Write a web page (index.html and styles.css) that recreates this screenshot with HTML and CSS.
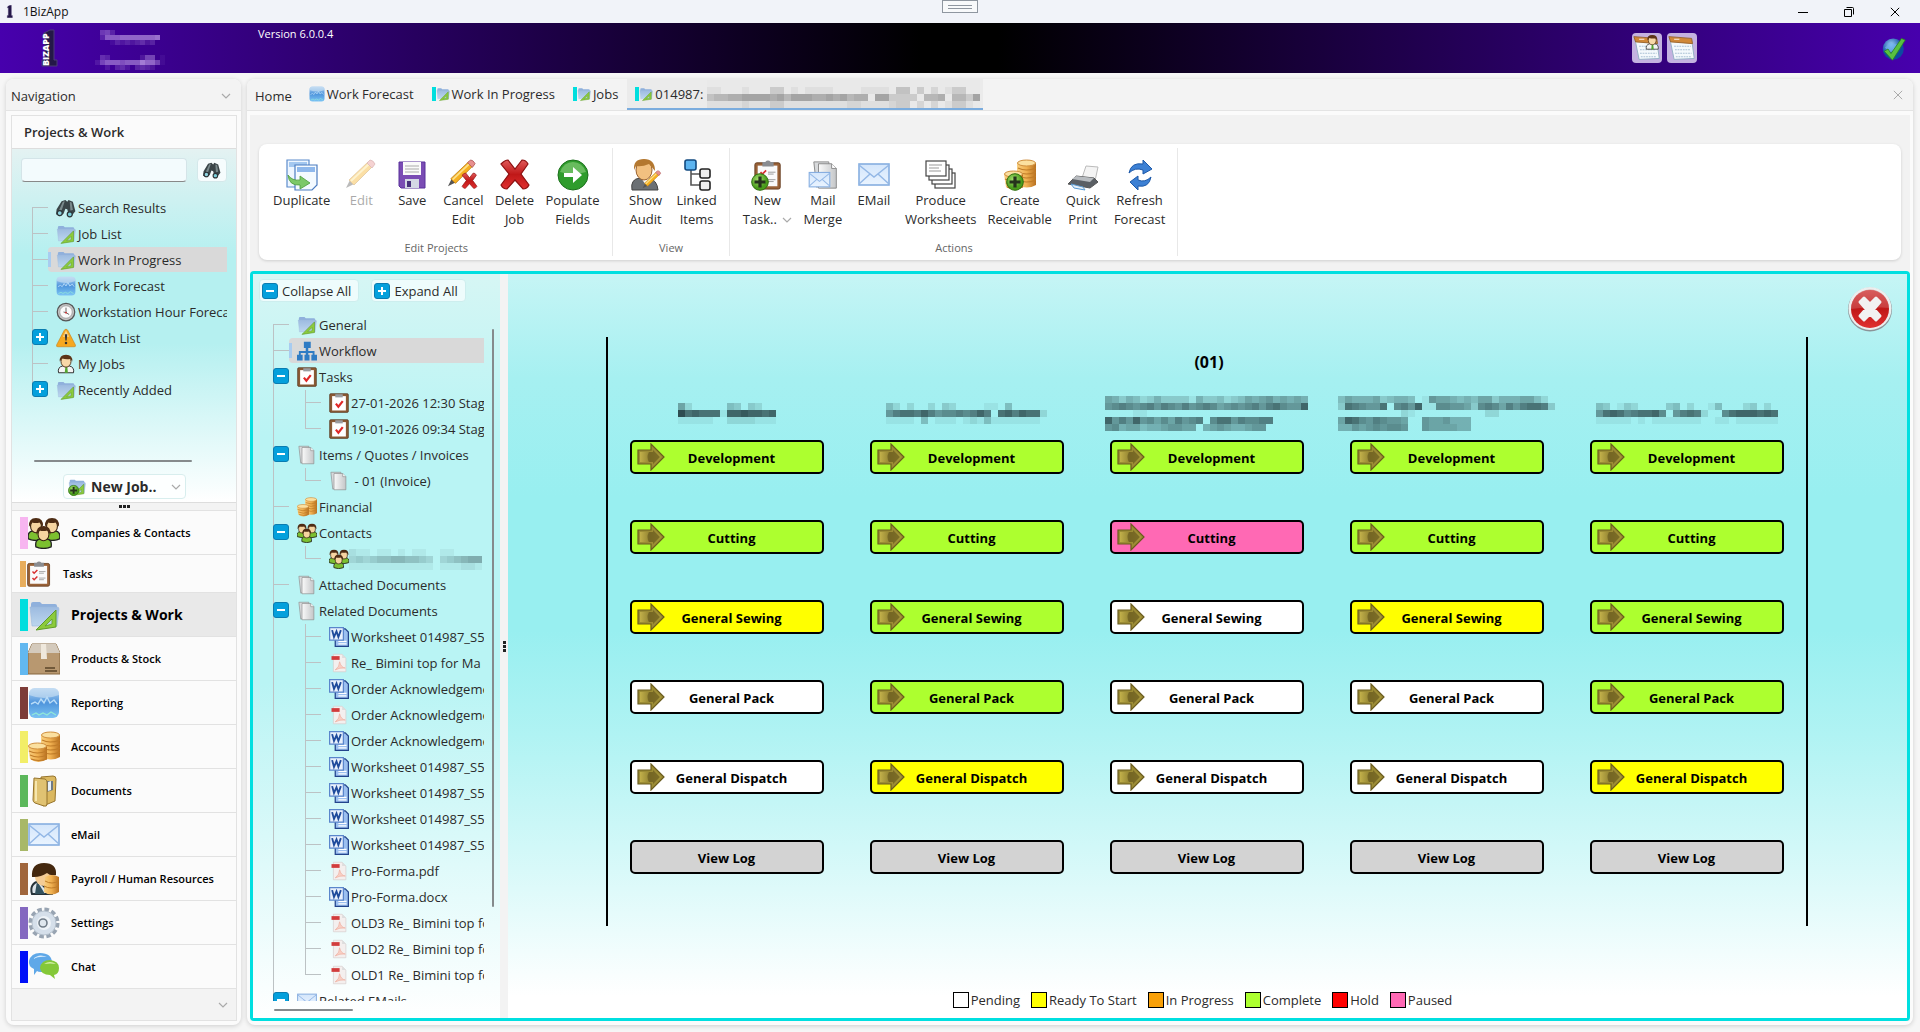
FILE: index.html
```html
<!DOCTYPE html>
<html lang="en">
<head>
<meta charset="utf-8">
<title>1BizApp</title>
<link rel="stylesheet" href="styles.css">
</head>
<body>
<svg class="sprite" width="0" height="0" aria-hidden="true">
  <defs>
    <linearGradient id="gGold" x1="0" x2="1"><stop offset="0" stop-color="#f8cf80"/><stop offset=".5" stop-color="#f0b050"/><stop offset="1" stop-color="#b87020"/></linearGradient>
    <linearGradient id="gFolder" x1="0" y1="0" x2="0" y2="1"><stop offset="0" stop-color="#9dbbe0"/><stop offset="1" stop-color="#bcd6ee"/></linearGradient>
    <linearGradient id="gBlue" x1="0" y1="0" x2="0" y2="1"><stop offset="0" stop-color="#b4d4f2"/><stop offset=".5" stop-color="#4f95dc"/><stop offset="1" stop-color="#7cc4f4"/></linearGradient>
    <linearGradient id="gRed" x1="0" y1="0" x2="0" y2="1"><stop offset="0" stop-color="#e05a5a"/><stop offset=".5" stop-color="#c01818"/><stop offset="1" stop-color="#e03030"/></linearGradient>
    <linearGradient id="gMail" x1="0" y1="0" x2="0" y2="1"><stop offset="0" stop-color="#d4e6fb"/><stop offset="1" stop-color="#eaf4ff"/></linearGradient>
    <linearGradient id="gGrey" x1="0" x2="1"><stop offset="0" stop-color="#fafafa"/><stop offset="1" stop-color="#c4c6c8"/></linearGradient>
    <linearGradient id="gOlive" x1="0" x2="1"><stop offset="0" stop-color="#c2b04a"/><stop offset=".5" stop-color="#8f8030"/><stop offset="1" stop-color="#b0a040"/></linearGradient>
    <radialGradient id="gGreen" cx=".4" cy=".35"><stop offset="0" stop-color="#a8e070"/><stop offset="1" stop-color="#4a9c1c"/></radialGradient>
    <radialGradient id="gGlobe" cx=".4" cy=".3"><stop offset="0" stop-color="#9cd0f8"/><stop offset="1" stop-color="#0c4aa0"/></radialGradient>
  </defs>
  <symbol id="binoculars" viewBox="0 0 32 32"><path d="M9 5l6-2 3 3 2-3 7 3 4 15-5 6-6-2-2-7-3-1-3 8-6 4-6-3 1-8z" fill="#3a4548"/><path d="M11 6l3-1-5 15-4-1zM22 6l3 1 2 12-4 1z" fill="#7a8a8c"/><circle cx="6" cy="24" r="4" fill="#8fd4e0" stroke="#2c3538" stroke-width="2"/><circle cx="22" cy="26" r="4" fill="#7cd0dc" stroke="#2c3538" stroke-width="2"/></symbol>
  <symbol id="folder" viewBox="0 0 32 32"><path d="M3 5q0-2 2-2h7l2 2h13q2 0 2 2v3H3z" fill="#8fb0dc"/><path d="M2 8h27q2 0 2 2l-2 17H4z" fill="url(#gFolder)" stroke="#9cb8dc" stroke-width=".6"/><path d="M28 11v17l-20 3z" fill="#8ccb3c" stroke="#5f9c28" stroke-width="1"/><path d="M24 20v5l-7 2z" fill="#bcd6ee" stroke="#5f9c28" stroke-width=".8"/></symbol>
  <symbol id="chart" viewBox="0 0 32 32"><rect x="1" y="1" width="30" height="30" rx="6" fill="url(#gBlue)"/><path d="M1 8q15 6 30 0V7q0-6-6-6H7Q1 1 1 7z" fill="#cfe2f4" opacity=".6"/><path d="M3 17l4-2 3 2 3-5 3 4 3-6 3 6 4-3 3 4" fill="none" stroke="#b8dcf8" stroke-width="1.4"/><path d="M4 28l4-2 3 2 4-2 4 2 4-3 5 3" fill="none" stroke="#90e8d8" stroke-width="1.2"/></symbol>
  <symbol id="clock" viewBox="0 0 32 32"><circle cx="16" cy="16" r="14" fill="#c4c4c4" stroke="#555" stroke-width="2"/><circle cx="16" cy="16" r="10" fill="#fbfbfb" stroke="#888"/><path d="M16 9v8l5 3M16 17l-4-1" fill="none" stroke="#555" stroke-width="1.4"/><circle cx="16" cy="17" r="1.5" fill="#d33"/></symbol>
  <symbol id="warn" viewBox="0 0 32 32"><path d="M16 2q2 0 3 2l12 23q1 3-2 3H3q-3 0-2-3L13 4q1-2 3-2z" fill="#f6a820" stroke="#c98018"/><path d="M16 4l5 10H11z" fill="#fcd890"/><path d="M14 10h4l-1 10h-2z" fill="#333"/><circle cx="16" cy="24" r="2" fill="#333"/></symbol>
  <symbol id="person" viewBox="0 0 32 32"><path d="M4 30q-2-9 7-11h10q9 2 7 11z" fill="#f4f4f4" stroke="#333" stroke-width="1.6"/><path d="M15 20h3l1 10h-5z" fill="#55a830"/><ellipse cx="16" cy="12" rx="8" ry="9" fill="#f8d8a8" stroke="#4a2c14" stroke-width="1.4"/><path d="M6 12Q5 1 16 1t10 11l-3-4q-8 1-13-1z" fill="#5c3418"/></symbol>
  <symbol id="head" viewBox="0 0 16 22"><path d="M1 20q-1-7 4-7h6q5 0 4 7-7 3-14 0z" fill="#7cc030" stroke="#222" stroke-width="1.2"/><ellipse cx="8" cy="8.500" rx="5" ry="6" fill="#f6d4a0" stroke="#3a2410"/><path d="M1.500 9Q1 1 8 1t6.500 8l-3-4q-4 1-7 0z" fill="#4e2c14"/></symbol>
  <symbol id="contacts" viewBox="0 0 32 32"><use href="#head" x="-1" y="0" width="18" height="24"/><use href="#head" x="15" y="0" width="18" height="24"/><use href="#head" x="6" y="8" width="19" height="24"/></symbol>
  <symbol id="check" viewBox="0 0 32 32"><rect x="1" y="1" width="30" height="30" rx="2" fill="#8a5a34" stroke="#50301a"/><rect x="5" y="5" width="22" height="23" fill="#fff"/><path d="M10 2h12v5H10z" fill="#9a9ca0"/><path d="M11 17l4 5 7-9" fill="none" stroke="#e02828" stroke-width="3.500"/></symbol>
  <symbol id="clipboard" viewBox="0 0 32 32"><rect x="2" y="3" width="27" height="28" rx="2" fill="#9a6238" stroke="#643c1e"/><rect x="5" y="6" width="21" height="22" fill="#fafafa"/><path d="M10 2h3q3-3 6 0h3v5H10z" fill="#8a8c90"/><path d="M8 13l2 2 4-4M8 21l2 2 4-4" fill="none" stroke="#d83030" stroke-width="1.8"/><path d="M16 13h8M16 15h6M16 21h8M16 23h6" stroke="#999"/></symbol>
  <symbol id="docs" viewBox="0 0 32 32"><path d="M3 2h16v23l-13 4z" fill="#d8dadc" stroke="#888"/><path d="M8 4h14l5 5v21H8z" fill="url(#gGrey)" stroke="#888"/><path d="M22 4v5h5" fill="#fff" stroke="#888"/></symbol>
  <symbol id="coins" viewBox="0 0 32 32"><path d="M13 4q9-6 19 0v22q-9 5-19 0z" fill="url(#gGold)"/><ellipse cx="22.500" cy="4" rx="9" ry="3" fill="#fbe0a0" stroke="#d09040"/><path d="M14 9q8 4 18 0M14 13q8 4 18 0M14 17q8 4 18 0M14 21q8 4 18 0" fill="none" stroke="#c07c28" stroke-width="1.200"/><path d="M0 15q9-5 19 0v13q-9 6-17 0z" fill="url(#gGold)"/><ellipse cx="9.500" cy="15" rx="9" ry="3" fill="#fbe0a0" stroke="#d09040"/><path d="M1 20q8 4 18 0M2 24q8 4 17 0M3 28q8 3 16 0" fill="none" stroke="#c07c28" stroke-width="1.200"/></symbol>
  <symbol id="word" viewBox="0 0 32 32"><path d="M10 3h16l5 5v23H10z" fill="#9cc0f0" stroke="#23448c" stroke-width="2"/><path d="M15 23h13M15 27h13" stroke="#fff" stroke-width="2"/><rect x="1" y="1" width="22" height="20" fill="#e8f0fc" stroke="#5a86cc" stroke-width="2"/><path d="M5 5l3 11 4-9 3 9 4-11" fill="none" stroke="#1f4b9c" stroke-width="3"/></symbol>
  <symbol id="pdf" viewBox="0 0 32 32"><path d="M7 2h14l6 6v22H7z" fill="#f4efee" stroke="#d4caca"/><path d="M21 2v6h6" fill="#ddd"/><path d="M4 5h13v6H4z" fill="#d23c3c"/><path d="M10 27q7-5 7-13 2 9 9 10-9-1-16 3z" fill="#f8cfc4" stroke="#eda898"/></symbol>
  <symbol id="mail" viewBox="0 0 32 32"><rect x="1" y="5" width="30" height="21" fill="url(#gMail)" stroke="#86aee0" stroke-width="1.600"/><path d="M1 6l15 12L31 6M1 25l11-10M31 25L20 15" fill="none" stroke="#94b8e6" stroke-width="1.500"/></symbol>
  <symbol id="org" viewBox="0 0 32 32"><path d="M11 1h11v10h-4v5h10v6h4v9h-9v-9h2v-3H18v3h2v9h-8v-9h2v-3H6v3h3v9H0v-9h3v-6h11v-5h-3z" fill="#2f7cc4"/></symbol>
  <symbol id="box" viewBox="0 0 32 32"><path d="M4 1h24l4 9v21H0V10z" fill="#b89870" stroke="#86663e"/><path d="M4 1h24l4 9H0z" fill="#d4cabc"/><path d="M13 1h5l1 15h-6z" fill="#efe8dc"/><path d="M17 25h10M17 28h12" stroke="#5a4428" stroke-width="1.500"/></symbol>
  <symbol id="binder" viewBox="0 0 32 32"><path d="M13 2l12-1q3 0 3 3l-1 22-12 5z" fill="#dbb860" stroke="#96742c"/><path d="M19 6h6v9l-6 2z" fill="#6f7a86"/><path d="M20 7l3-1v9l-3 1z" fill="#e8f0f8"/><path d="M6 3l11 1q2 1 2 3v22q0 3-3 2L7 28q-2-1-2-3z" fill="#e0c272" stroke="#96742c"/><path d="M8 6v20" stroke="#f6e6ae" stroke-width="2"/></symbol>
  <symbol id="hr" viewBox="0 0 32 32"><path d="M4 31q-3-10 7-13l12 13z" fill="#dce4ea" stroke="#27333a" stroke-width="2"/><path d="M9 18l8 13H7z" fill="#34525e"/><ellipse cx="16" cy="14" rx="9" ry="9" fill="#f4cc96"/><path d="M4 14Q3 0 16 0t12 12q-6 1-9-2-6 4-13 4z" fill="#44280f"/><path d="M17 14q7-4 14 0v15q-8 5-15 0z" fill="url(#gGold)"/><path d="M17 18q7 4 14 0M16 23q7 4 15 0" fill="none" stroke="#c07c28"/></symbol>
  <symbol id="gear" viewBox="0 0 32 32"><circle cx="16" cy="16" r="13.500" fill="none" stroke="#98a4b2" stroke-width="4" stroke-dasharray="4.500 2.570"/><circle cx="16" cy="16" r="12" fill="#d5dfea" stroke="#b4c0cc"/><circle cx="16" cy="16" r="7" fill="#eef3f8"/><circle cx="15" cy="16" r="4" fill="#dfe7ee" stroke="#707c88" stroke-width="1.600"/></symbol>
  <symbol id="chat" viewBox="0 0 32 32"><path d="M12 2q12 0 12 10T13 21q-3 0-4-1l-3 4 0-6Q0 15 1 10 3 2 12 2z" fill="#5fa8e8"/><path d="M5 8q6-6 14-2-8-1-14 2z" fill="#d8ecfc"/><path d="M22 9q9 1 9 8 0 6-5 7l1 4-5-4q-9 0-10-7 1-8 10-8z" fill="#84c838"/><path d="M16 13q6-4 12 0-6-1-12 0z" fill="#d4f0a8"/></symbol>
  <symbol id="duplicate" viewBox="0 0 32 32"><path d="M1 1h22v27H1z" fill="#eef6ff" stroke="#5c8ccc" stroke-width="1.200"/><path d="M3 3h18v5H3z" fill="#a4c8f0"/><path d="M9 6h22v20l-5 5H9z" fill="#f4faff" stroke="#4c7cc0" stroke-width="1.200"/><path d="M11 8h18v5H11z" fill="#8fb8ec"/><path d="M2 16q4 6 12 5v-4l10 7-10 6v-4Q3 27 2 16z" fill="#7cc868" stroke="#4c9c3c" stroke-width=".8"/></symbol>
  <symbol id="pencil" viewBox="0 0 32 32"><path d="M1 29l4-8 4 4z" fill="#555"/><path d="M4 21L23 3l5 4L9 26z" fill="#f6b020" stroke="#b87814" stroke-width=".8"/><path d="M6 22L24 5" stroke="#fce088" stroke-width="2"/><path d="M22 4l3-3q3 0 5 4l-3 4z" fill="#e89090" stroke="#a85050" stroke-width=".8"/></symbol>
  <symbol id="redx" viewBox="0 0 32 32"><path d="M2 5q4-4 7-4l7 9 7-9q4 0 6 4l-7 10 8 11q-2 4-6 4l-8-9-8 9q-4 0-6-4l8-11z" fill="url(#gRed)" stroke="#8c1010" stroke-width="1.200"/></symbol>
  <symbol id="save" viewBox="0 0 32 32"><path d="M3 3h26v26H5l-2-2z" fill="#7a4cb4" stroke="#58309a"/><path d="M7 3h18v13H7z" fill="#fafafa"/><path d="M9 7h14M9 10h14M9 13h14" stroke="#aaa"/><path d="M9 20h14v9H9z" fill="#d4d8e4"/><path d="M11 22h4v6h-4z" fill="#48307c"/></symbol>
  <symbol id="cancel" viewBox="0 0 32 32"><use href="#pencil" width="30" height="30"/><use href="#redx" x="14" y="13" width="17" height="18"/></symbol>
  <symbol id="populate" viewBox="0 0 32 32"><circle cx="16" cy="16" r="15" fill="#2f9c2c" stroke="#1c701c"/><path d="M3 13Q7 3 16 3t13 10q-13 4-26 0z" fill="#8fd080" opacity=".6"/><path d="M7 14h9V8l9 8-9 8v-6H7z" fill="#fff"/></symbol>
  <symbol id="audit" viewBox="0 0 32 32"><path d="M2 31q-2-11 8-12h9q8 2 9 12z" fill="#6b7074" stroke="#444"/><path d="M11 19l5 7 4-7z" fill="#fff"/><ellipse cx="14" cy="11" rx="8" ry="10" fill="#f2c080" stroke="#99602c"/><path d="M4 11Q3 0 14 0t11 12q-4-5-6-7-7 3-13 2z" fill="#b47830"/><use href="#pencil" x="12" y="11" width="20" height="20"/></symbol>
  <symbol id="linked" viewBox="0 0 32 32"><path d="M10 11v15h10M10 15h10" fill="none" stroke="#555" stroke-width="1.600"/><rect x="4" y="1" width="11" height="10" rx="2" fill="#5cb4f0" stroke="#124a80" stroke-width="1.600"/><rect x="19" y="10" width="10" height="9" rx="2" fill="#eee" stroke="#222" stroke-width="1.600"/><rect x="19" y="22" width="10" height="9" rx="2" fill="#eee" stroke="#222" stroke-width="1.600"/></symbol>
  <symbol id="plus" viewBox="0 0 18 18"><circle cx="9" cy="9" r="8.300" fill="url(#gGreen)" stroke="#2f7010"/><path d="M9 3.500v11M3.500 9h11" stroke="#26331c" stroke-width="3.200"/></symbol>
  <symbol id="newtask" viewBox="0 0 32 32"><use href="#clipboard" x="2" width="30" height="32"/><use href="#plus" x="0" y="14" width="18" height="18"/></symbol>
  <symbol id="newjob" viewBox="0 0 32 32"><use href="#folder" width="32" height="32"/><use href="#plus" x="0" y="12" width="20" height="20"/></symbol>
  <symbol id="merge" viewBox="0 0 32 32"><use href="#docs" x="4" width="30" height="32"/><use href="#mail" x="1" y="10" width="23" height="22"/></symbol>
  <symbol id="sheets" viewBox="0 0 32 32"><g fill="#fff" stroke="#444" stroke-width="1.200"><rect x="10" y="14" width="20" height="15"/><rect x="7" y="10" width="20" height="15"/><rect x="4" y="6" width="20" height="15"/><rect x="1" y="2" width="20" height="15"/></g><path d="M4 6h13M4 9h10M4 12h12" stroke="#999"/></symbol>
  <symbol id="receivable" viewBox="0 0 32 32"><use href="#coins" width="32" height="32"/><use href="#plus" x="2" y="14" width="18" height="18"/></symbol>
  <symbol id="printer" viewBox="0 0 32 32"><path d="M19 7l12 1-3 14-13-3z" fill="#f4f4f4" stroke="#bbb"/><path d="M9 17l18 2 4 4-8 6L1 25z" fill="#5a5f64" stroke="#555"/><path d="M9 17l18 2-4 4-18-3z" fill="#b8bcc0"/><path d="M4 25l12 3 2 3-11-2z" fill="#e8f0f8" stroke="#5a9ad0"/></symbol>
  <symbol id="refresh" viewBox="0 0 32 32"><path d="M5 14Q7 3 19 5l0-4 9 9-9 5v-4Q11 8 5 14z" fill="#3c80d4" stroke="#1c58a8"/><path d="M27 18q-2 11-13 9v4l-8-8 8-6v4q7 3 13-3z" fill="#3c80d4" stroke="#1c58a8"/></symbol>
  <symbol id="calendar" viewBox="0 0 32 32"><path d="M2 5l25 1 3 22-23 1z" fill="#f4f9fc" stroke="#8cacc0"/><path d="M1 3l26 2 1 6-25-2z" fill="#d08838" stroke="#94602c"/><path d="M7 6h6" stroke="#fff"/><path d="M7 14h19M8 18h18M8 22h19M9 26h18" stroke="#a8c0d4" stroke-width="1.400" stroke-dasharray="2 1"/></symbol>
  <symbol id="calperson" viewBox="0 0 32 32"><use href="#calendar" width="32" height="32"/><use href="#person" x="13" width="18" height="19"/></symbol>
  <symbol id="globe" viewBox="0 0 32 32"><circle cx="15" cy="16" r="14" fill="url(#gGlobe)"/><path d="M4 14l7-6 9 2-4 8-6 3z" fill="#6cb0ec" opacity=".7"/><path d="M3 19l5-3 4 6L26 2l5 2-17 27z" fill="#58c040" stroke="#28801c"/></symbol>
  <symbol id="arrow" viewBox="0 0 28 28"><path d="M1 7h13V1l13 13-13 13v-6H1z" fill="#9c8c34" stroke="#6a5c1e" stroke-width="1.200"/><path d="M3 9h13V6l8 8-8 8v-3H3z" fill="url(#gOlive)"/><path d="M12 9h4V7l7 7-7 7v-2h-4q-3-5 0-10z" fill="#6c5e20" opacity=".75"/></symbol>
  <symbol id="close" viewBox="0 0 46 46"><circle cx="23" cy="23.500" r="22" fill="#8b9498"/><circle cx="23" cy="22.500" r="21.500" fill="#eceeee"/><circle cx="23" cy="23" r="19" fill="url(#gRed)"/><path d="M4 23A19 19 0 0 1 42 22Q24 20 4 23z" fill="#d06060" opacity=".5"/><path d="M13 16l4-4 6 6 6-6 4 4-6 7 6 7-4 4-6-6-6 6-4-4 6-7z" fill="#f2f2f2" stroke="#f2f2f2" stroke-width="3" stroke-linejoin="round"/></symbol>
  <symbol id="chev" viewBox="0 0 10 10"><path d="M1 3l4 4 4-4" fill="none" stroke="currentColor" stroke-width="1.200"/></symbol>
  <symbol id="cross" viewBox="0 0 12 12"><path d="M1 1l10 10M11 1L1 11" fill="none" stroke="currentColor" stroke-width="1.200"/></symbol>
  <symbol id="logo" viewBox="0 0 20 38"><path d="M4 4l6-3h4v30h3v6H2v-6h3V8H2z" fill="#241848" stroke="#4c3c78"/></symbol>
</svg>

<header class="titlebar">
  <svg class="app-icon"><use href="#logo"/></svg>
  <span class="app-title">1BizApp</span>
  <span class="grip"></span>
  <div class="window-buttons">
    <button aria-label="Minimize"><svg viewBox="0 0 10 10"><path d="M0 5.500h10" stroke="#000"/></svg></button>
    <button aria-label="Restore"><svg viewBox="0 0 10 10"><path d="M.5 2.500h7v7h-7zM2.500 .5h6q1 0 1 1v6" fill="none" stroke="#000"/></svg></button>
    <button aria-label="Close"><svg viewBox="0 0 12 12"><use href="#cross"/></svg></button>
  </div>
</header>

<div class="banner">
  <div class="brand"><svg class="brand-mark"><use href="#logo"/></svg><span class="brand-name">BIZAPP</span></div>
  <div class="user">
    <svg class="mosaic" data-cell="5" data-color="#c9a8ec" data-cells="056300000000|038889999999a|000132323423"></svg>
    <svg class="mosaic" data-cell="5" data-color="#c9a8ec" data-cells="04300000026601|268887888b9961|00203420343200"></svg>
  </div>
  <span class="version">Version 6.0.0.4</span>
  <div class="quick">
    <button aria-label="My calendar"><svg><use href="#calperson"/></svg></button>
    <button aria-label="Calendar"><svg><use href="#calendar"/></svg></button>
  </div>
  <svg class="status"><use href="#globe"/></svg>
</div>

<div class="workspace">
  <aside class="nav card">
    <div class="card-head"><span>Navigation</span><button class="plain" aria-label="Collapse"><svg class="s10"><use href="#chev"/></svg></button></div>
    <div class="nav-body">
      <h2>Projects &amp; Work</h2>
      <div class="nav-pane">
        <div class="search"><input type="text" aria-label="Search"><button aria-label="Search"><svg><use href="#binoculars"/></svg></button></div>
        <ul class="tree">
          <li><div class="row"><i></i><svg><use href="#binoculars"/></svg><a href="#">Search Results</a></div></li>
          <li><div class="row"><i></i><svg><use href="#folder"/></svg><a href="#">Job List</a></div></li>
          <li><div class="row"><i></i><div class="picked"><svg><use href="#folder"/></svg><a href="#">Work In Progress</a></div></div></li>
          <li><div class="row"><i></i><svg><use href="#chart"/></svg><a href="#">Work Forecast</a></div></li>
          <li><div class="row"><i></i><svg><use href="#clock"/></svg><a href="#">Workstation Hour Forecast</a></div></li>
          <li><div class="row"><button class="tog open" aria-label="Expand"></button><svg><use href="#warn"/></svg><a href="#">Watch List</a></div></li>
          <li><div class="row"><i></i><svg><use href="#person"/></svg><a href="#">My Jobs</a></div></li>
          <li><div class="row"><button class="tog open" aria-label="Expand"></button><svg><use href="#folder"/></svg><a href="#">Recently Added</a></div></li>
        </ul>
        <div class="hscroll"></div>
        <button class="newjob"><svg><use href="#newjob"/></svg><span>New Job..</span><svg class="s10"><use href="#chev"/></svg></button>
      </div>
      <div class="splitter-h"></div>
      <nav class="sections">
        <button><b class="c1"></b><svg><use href="#contacts"/></svg><span>Companies &amp; Contacts</span></button>
        <button class="small"><b class="c2"></b><svg><use href="#clipboard"/></svg><span>Tasks</span></button>
        <button class="current"><b class="c3"></b><svg><use href="#folder"/></svg><span>Projects &amp; Work</span></button>
        <button><b class="c4"></b><svg><use href="#box"/></svg><span>Products &amp; Stock</span></button>
        <button><b class="c5"></b><svg><use href="#chart"/></svg><span>Reporting</span></button>
        <button><b class="c6"></b><svg><use href="#coins"/></svg><span>Accounts</span></button>
        <button><b class="c7"></b><svg><use href="#binder"/></svg><span>Documents</span></button>
        <button><b class="c8"></b><svg><use href="#mail"/></svg><span>eMail</span></button>
        <button><b class="c9"></b><svg><use href="#hr"/></svg><span>Payroll / Human Resources</span></button>
        <button><b class="c10"></b><svg><use href="#gear"/></svg><span>Settings</span></button>
        <button><b class="c11"></b><svg><use href="#chat"/></svg><span>Chat</span></button>
      </nav>
      <div class="nav-foot"><button class="plain" aria-label="More"><svg class="s10"><use href="#chev"/></svg></button></div>
    </div>
  </aside>

  <main class="main card">
    <div class="card-head tabs">
      <button>Home</button>
      <button><svg><use href="#chart"/></svg>Work Forecast</button>
      <button><b></b><svg class="thin"><use href="#folder"/></svg>Work In Progress</button>
      <button><b></b><svg class="thin"><use href="#folder"/></svg>Jobs</button>
      <button class="active"><b></b><svg class="thin"><use href="#folder"/></svg>014987:<svg class="mosaic" data-cell="7" data-color="#555555" data-cells="000000000000000000000000000000000000000|110001000330101111000011110440302013300|455667777675777667675660773333055605537|111112111331111111112211112330202013310"></svg></button>
      <button class="plain tab-close" aria-label="Close tab"><svg><use href="#cross"/></svg></button>
    </div>
    <div class="main-body">
      <div class="ribbon">
        <section>
          <div class="tools">
            <button><svg><use href="#duplicate"/></svg>Duplicate</button>
            <button disabled><svg><use href="#pencil"/></svg>Edit</button>
            <button><svg><use href="#save"/></svg>Save</button>
            <button><svg><use href="#cancel"/></svg>Cancel<br>Edit</button>
            <button><svg><use href="#redx"/></svg>Delete<br>Job</button>
            <button><svg><use href="#populate"/></svg>Populate<br>Fields</button>
          </div>
          <h3>Edit Projects</h3>
        </section>
        <section>
          <div class="tools">
            <button><svg><use href="#audit"/></svg>Show<br>Audit</button>
            <button><svg><use href="#linked"/></svg>Linked<br>Items</button>
          </div>
          <h3>View</h3>
        </section>
        <section>
          <div class="tools">
            <button><svg><use href="#newtask"/></svg>New<br><span>Task.. <svg class="s10"><use href="#chev"/></svg></span></button>
            <button><svg><use href="#merge"/></svg>Mail<br>Merge</button>
            <button><svg><use href="#mail"/></svg>EMail</button>
            <button><svg><use href="#sheets"/></svg>Produce<br>Worksheets</button>
            <button><svg><use href="#receivable"/></svg>Create<br>Receivable</button>
            <button><svg><use href="#printer"/></svg>Quick<br>Print</button>
            <button><svg><use href="#refresh"/></svg>Refresh<br>Forecast</button>
          </div>
          <h3>Actions</h3>
        </section>
      </div>

      <div class="job">
        <div class="job-tree">
          <div class="tree-buttons">
            <button><span class="tog"></span>Collapse All</button>
            <button><span class="tog open"></span>Expand All</button>
          </div>
          <div class="tree-view">
            <ul class="tree">
              <li><div class="row"><i></i><svg><use href="#folder"/></svg><a href="#">General</a></div></li>
              <li><div class="row"><i></i><div class="picked"><svg><use href="#org"/></svg><a href="#">Workflow</a></div></div></li>
              <li><div class="row"><button class="tog" aria-label="Collapse"></button><svg><use href="#check"/></svg><a href="#">Tasks</a></div>
                <ul>
                  <li><div class="row"><i></i><svg><use href="#check"/></svg><a href="#">27-01-2026 12:30 Stage</a></div></li>
                  <li><div class="row"><i></i><svg><use href="#check"/></svg><a href="#">19-01-2026 09:34 Stage</a></div></li>
                </ul></li>
              <li><div class="row"><button class="tog" aria-label="Collapse"></button><svg><use href="#docs"/></svg><a href="#">Items / Quotes / Invoices</a></div>
                <ul><li><div class="row"><i></i><svg><use href="#docs"/></svg><a href="#">&nbsp;- 01 (Invoice)</a></div></li></ul></li>
              <li><div class="row"><i></i><svg><use href="#coins"/></svg><a href="#">Financial</a></div></li>
              <li><div class="row"><button class="tog" aria-label="Collapse"></button><svg><use href="#contacts"/></svg><a href="#">Contacts</a></div>
                <ul><li><div class="row"><i></i><svg><use href="#contacts"/></svg><svg class="mosaic" data-cell="7" data-color="#3c5c60" data-cells="2110110101100110000|3434556655430345677|1111111111110111221"></svg></div></li></ul></li>
              <li><div class="row"><i></i><svg><use href="#docs"/></svg><a href="#">Attached Documents</a></div></li>
              <li><div class="row"><button class="tog" aria-label="Collapse"></button><svg><use href="#docs"/></svg><a href="#">Related Documents</a></div>
                <ul>
                  <li><div class="row"><i></i><svg><use href="#word"/></svg><a href="#">Worksheet 014987_S5</a></div></li>
                  <li><div class="row"><i></i><svg><use href="#pdf"/></svg><a href="#">Re_ Bimini top for Ma</a></div></li>
                  <li><div class="row"><i></i><svg><use href="#word"/></svg><a href="#">Order Acknowledgement</a></div></li>
                  <li><div class="row"><i></i><svg><use href="#pdf"/></svg><a href="#">Order Acknowledgement</a></div></li>
                  <li><div class="row"><i></i><svg><use href="#word"/></svg><a href="#">Order Acknowledgement</a></div></li>
                  <li><div class="row"><i></i><svg><use href="#word"/></svg><a href="#">Worksheet 014987_S5</a></div></li>
                  <li><div class="row"><i></i><svg><use href="#word"/></svg><a href="#">Worksheet 014987_S5</a></div></li>
                  <li><div class="row"><i></i><svg><use href="#word"/></svg><a href="#">Worksheet 014987_S5</a></div></li>
                  <li><div class="row"><i></i><svg><use href="#word"/></svg><a href="#">Worksheet 014987_S5</a></div></li>
                  <li><div class="row"><i></i><svg><use href="#pdf"/></svg><a href="#">Pro-Forma.pdf</a></div></li>
                  <li><div class="row"><i></i><svg><use href="#word"/></svg><a href="#">Pro-Forma.docx</a></div></li>
                  <li><div class="row"><i></i><svg><use href="#pdf"/></svg><a href="#">OLD3 Re_ Bimini top for</a></div></li>
                  <li><div class="row"><i></i><svg><use href="#pdf"/></svg><a href="#">OLD2 Re_ Bimini top for</a></div></li>
                  <li><div class="row"><i></i><svg><use href="#pdf"/></svg><a href="#">OLD1 Re_ Bimini top for</a></div></li>
                </ul></li>
              <li><div class="row"><button class="tog" aria-label="Collapse"></button><svg><use href="#mail"/></svg><a href="#">Related EMails</a></div></li>
            </ul>
            <div class="vscroll"></div>
          </div>
          <div class="hscroll"></div>
        </div>
        <div class="splitter-v"></div>
        <section class="flow">
          <button class="plain flow-close" aria-label="Close"><svg><use href="#close"/></svg></button>
          <div class="board">
            <h1>(01)</h1>
            <div class="columns">
              <div class="column">
                <div class="caption"><svg class="mosaic" data-cell="7" data-color="#1c3438" data-cells="62000004303200|dabaaa1bbcbbab|11111002222111"></svg></div>
                <button class="done"><svg><use href="#arrow"/></svg><span>Development</span></button>
                <button class="done"><svg><use href="#arrow"/></svg><span>Cutting</span></button>
                <button class="ready"><svg><use href="#arrow"/></svg><span>General Sewing</span></button>
                <button><svg><use href="#arrow"/></svg><span>General Pack</span></button>
                <button><svg><use href="#arrow"/></svg><span>General Dispatch</span></button>
                <button class="log">View Log</button>
              </div>
              <div class="column">
                <div class="caption"><svg class="mosaic" data-cell="7" data-color="#1c3438" data-cells="42020020320000110400000|79aa9b9788989b90ab9baa2|11110401110121411111110"></svg></div>
                <button class="done"><svg><use href="#arrow"/></svg><span>Development</span></button>
                <button class="done"><svg><use href="#arrow"/></svg><span>Cutting</span></button>
                <button class="done"><svg><use href="#arrow"/></svg><span>General Sewing</span></button>
                <button class="done"><svg><use href="#arrow"/></svg><span>General Pack</span></button>
                <button class="ready"><svg><use href="#arrow"/></svg><span>General Dispatch</span></button>
                <button class="log">View Log</button>
              </div>
              <div class="column">
                <div class="caption"><svg class="mosaic" data-cell="7" data-color="#1c3438" data-cells="65354235333315334234656756565|789878979879789867878979a877b|00001100000000000000000000000|b797b78686978908aa79889900000|78566455677660567655677000000"></svg></div>
                <button class="done"><svg><use href="#arrow"/></svg><span>Development</span></button>
                <button class="paused"><svg><use href="#arrow"/></svg><span>Cutting</span></button>
                <button><svg><use href="#arrow"/></svg><span>General Sewing</span></button>
                <button><svg><use href="#arrow"/></svg><span>General Pack</span></button>
                <button><svg><use href="#arrow"/></svg><span>General Dispatch</span></button>
                <button class="log">View Log</button>
              </div>
              <div class="column">
                <div class="caption"><svg class="mosaic" data-cell="7" data-color="#1c3438" data-cells="4655563455401766545466355566420|3a9877a0897b118877638986979aa93|0000000002100000000002200000000|6ba8798776007667555000000000000|5576787887007666655000000000000"></svg></div>
                <button class="done"><svg><use href="#arrow"/></svg><span>Development</span></button>
                <button class="done"><svg><use href="#arrow"/></svg><span>Cutting</span></button>
                <button class="ready"><svg><use href="#arrow"/></svg><span>General Sewing</span></button>
                <button><svg><use href="#arrow"/></svg><span>General Pack</span></button>
                <button><svg><use href="#arrow"/></svg><span>General Dispatch</span></button>
                <button class="log">View Log</button>
              </div>
              <div class="column">
                <div class="caption"><svg class="mosaic" data-cell="7" data-color="#1c3438" data-cells="43013200003402001400023020|7aba89aab8079a92008abbbaba|11111010111111100110111111"></svg></div>
                <button class="done"><svg><use href="#arrow"/></svg><span>Development</span></button>
                <button class="done"><svg><use href="#arrow"/></svg><span>Cutting</span></button>
                <button class="done"><svg><use href="#arrow"/></svg><span>General Sewing</span></button>
                <button class="done"><svg><use href="#arrow"/></svg><span>General Pack</span></button>
                <button class="ready"><svg><use href="#arrow"/></svg><span>General Dispatch</span></button>
                <button class="log">View Log</button>
              </div>
            </div>
          </div>
          <ul class="legend">
            <li><b></b>Pending</li>
            <li><b class="ready"></b>Ready To Start</li>
            <li><b class="progress"></b>In Progress</li>
            <li><b class="done"></b>Complete</li>
            <li><b class="hold"></b>Hold</li>
            <li><b class="paused"></b>Paused</li>
          </ul>
        </section>
      </div>
    </div>
  </main>
</div>
<script src="mosaic.js"></script>
</body>
</html>
```
FILE: styles.css
```css
* { box-sizing: border-box; margin: 0; padding: 0; }
body {
  height: 100vh;
  display: flex;
  flex-direction: column;
  overflow: hidden;
  background: #f6f6f6;
  color: #2b2b2b;
  font: 13px/20px "Open Sans", "Noto Sans", sans-serif;
}
button { font: inherit; color: inherit; border: 0; background: none; }
ul { list-style: none; }
a { color: inherit; text-decoration: none; }
svg { display: block; flex: none; }
.sprite { position: absolute; }
.plain { display: flex; color: #aaa; }
.s10 { width: 10px; height: 10px; color: #aaa; }

.titlebar { height: 23px; flex: none; display: flex; align-items: center; background: #f1f3f9; padding-left: 4px; position: relative; }
.app-icon { width: 12px; height: 13px; }
.app-title { margin-left: 7px; font-size: 12px; color: #111; }
.grip { position: absolute; top: 0; left: 50%; width: 36px; height: 13px; margin-left: -18px; border: 1px solid #8f96a0; background: linear-gradient(#8f96a0, #8f96a0) center 4px / 24px 1px no-repeat, linear-gradient(#8f96a0, #8f96a0) center 7px / 24px 1px no-repeat, #f8f9fb; }
.window-buttons { margin-left: auto; padding-right: 2px; display: flex; }
.window-buttons button { width: 46px; height: 20px; display: grid; place-items: center; color: #000; }
.window-buttons svg { width: 10px; height: 10px; }

.banner { height: 50px; flex: none; display: flex; align-items: flex-start; color: #fff; background: linear-gradient(90deg, #4700ad, #000 48%, #000 52%, #4700ad); padding-right: 14px; }
.brand { width: 77px; padding: 5px 0 0 40px; display: grid; }
.brand > * { grid-area: 1 / 1; }
.brand-mark { width: 20px; height: 40px; }
.brand-name { writing-mode: vertical-rl; transform: rotate(180deg); font-size: 9px; line-height: 12px; font-weight: 800; height: 38px; width: 16px; }
.user { width: 181px; padding: 7px 0 0 18px; display: grid; gap: 10px; }
.version { font-size: 11px; line-height: 22px; }
.quick { margin-left: auto; display: flex; gap: 5px; padding-top: 10px; }
.quick button { width: 30px; height: 30px; border-radius: 4px; background: #c4b2e0; padding: 1px; }
.quick svg { width: 28px; height: 28px; }
.status { width: 24px; height: 26px; margin: 13px 0 0 185px; }

.workspace { flex: 1; min-height: 0; display: flex; gap: 6px; padding: 6px 7px 7px 6px; }
.card { display: flex; flex-direction: column; background: #fbfbfb; border-radius: 8px; box-shadow: 0 1px 5px #0000002a; }
.card-head { height: 32px; flex: none; display: flex; align-items: center; justify-content: space-between; background: #f3f3f3; border-bottom: 1px solid #e4e4e4; border-radius: 8px 8px 0 0; }

.nav { width: 235px; flex: none; padding-bottom: 4px; }
.nav .card-head { padding: 2px 10px 0 5px; }
.nav-body { flex: 1; min-height: 0; display: flex; flex-direction: column; margin: 4px 4px 0 5px; border: 1px solid #e2e2e2; }
h2 { font-size: 13px; line-height: 32px; font-weight: 600; padding-left: 12px; border-bottom: 1px solid #ddd; }
.nav-pane { flex: 1; min-height: 0; display: flex; flex-direction: column; padding: 9px 9px 3px; background: linear-gradient(#e4f2f2, #b5f0f0 30%, #b5f0f0 55%, #fff); }
.search { display: flex; justify-content: space-between; }
.search input { width: 166px; height: 24px; border: 1px solid #d4e4e8; border-bottom-color: #888; border-radius: 4px; background: #f3fbfd; }
.search button { width: 30px; height: 24px; display: grid; place-items: center; border: 1px solid #d4e8ea; border-radius: 4px; background: #f6fcfd; }
.search svg { width: 18px; height: 18px; }
.nav-pane .tree { margin: 13px 0 0 11px; flex: 1; overflow: hidden; }
.hscroll { height: 2px; flex: none; background: #858a8c; border-radius: 1px; }
.nav-pane .hscroll { width: 158px; margin-left: 13px; }
.newjob { height: 25px; width: 123px; margin: 12px 0 0 42px; display: flex; align-items: center; gap: 5px; padding: 0 4px; border: 1px solid #d8eeee; border-radius: 4px; background: #fdffff; font-size: 14px; font-weight: 700; }
.newjob svg { width: 18px; height: 18px; }
.newjob .s10 { width: 10px; height: 10px; margin-left: auto; }
.splitter-h { height: 8px; flex: none; border-top: 1px solid #ddd; background: #f3f3f3; }
.splitter-h::before { content: ""; display: block; width: 11px; height: 3px; margin: 2px auto 0; background: repeating-linear-gradient(90deg, #222 0 3px, transparent 3px 4px); }
.sections { display: flex; flex-direction: column; flex: none; }
.sections button { height: 44px; display: flex; align-items: center; padding-left: 8px; border-top: 1px solid #e2e2e2; text-align: left; font-size: 11px; font-weight: 600; color: #000; }
.sections b { width: 8px; height: 32px; }
.sections svg { width: 32px; height: 32px; margin-right: 11px; }
.sections .small { height: 38px; }
.sections .small b { width: 6px; height: 26px; }
.sections .small svg { width: 26px; height: 26px; }
.sections .current { background: #e9e9e9; font-size: 14px; font-weight: 700; }
.c1 { background: #f7b5f0; } .c2 { background: #e8ad5c; } .c3 { background: #00dede; } .c4 { background: #62b8f0; }
.c5 { background: #7d3c38; } .c6 { background: #f2ee68; } .c7 { background: #5cb85c; } .c8 { background: #a8b868; }
.c9 { background: #a0663c; } .c10 { background: #8468c0; } .c11 { background: #0010f8; }
.nav-foot { height: 32px; flex: none; display: flex; align-items: center; justify-content: flex-end; padding-right: 8px; border-top: 1px solid #e2e2e2; background: #f3f3f3; }

.tree li { background: linear-gradient(#bcc2c4, #bcc2c4) 0 0 / 1px 100% no-repeat; }
.tree > li:first-child { background-position: 0 12px; }
.tree li:last-child { background-size: 1px 12px; }
.tree ul { padding-left: 32px; }
.row { height: 26px; display: flex; align-items: center; white-space: nowrap; overflow: hidden; }
.row i { width: 16px; height: 1px; flex: none; background: #bcc2c4; margin-bottom: 2px; }
.row svg { width: 20px; height: 20px; margin-left: 8px; }
.row a { margin-left: 2px; }
.row .mosaic { margin-left: 0; }
.picked { flex: 1; height: 25px; margin-bottom: 1px; display: flex; align-items: center; background: linear-gradient(#a8ccf0, #a8ccf0) 0 center / 3px 15px no-repeat, #d9d9d9; border-radius: 4px 0 0 4px; }
.tog { width: 16px; height: 16px; flex: none; margin-bottom: 2px; border: 1px solid #0a7cb0; border-radius: 3px; background: linear-gradient(#fff, #fff) center / 8px 2px no-repeat, #04a0dc; }
.tog.open { background: linear-gradient(#fff, #fff) center / 8px 2px no-repeat, linear-gradient(#fff, #fff) center / 2px 8px no-repeat, #04a0dc; }

.main { flex: 1; min-width: 0; padding-bottom: 4px; }
.tabs { justify-content: flex-start; align-items: stretch; }
.tabs button { display: flex; align-items: center; padding: 0 9px 2px; }
.tabs button:first-child { padding: 2px 8px 0; }
.tabs svg { width: 16px; height: 16px; margin-right: 2px; }
.tabs b { width: 4px; height: 14px; background: #00dede; }
.tabs .thin { width: 14px; }
.tabs .active { padding: 0 3px 0 8px; background: #ebebeb; border-bottom: 2px solid #7aacde; }
.tabs .active .mosaic { margin: 0 0 0 4px; background: #e9e9e9; }
.tabs .tab-close { margin-left: auto; padding: 0 10px; }
.tab-close svg { width: 10px; height: 10px; margin: 0; }
.main-body { flex: 1; min-height: 0; display: flex; flex-direction: column; margin: 4px 3px 0; background: #f2f2f2; padding-top: 29px; }

.ribbon { height: 116px; flex: none; display: flex; margin: 0 9px 11px; padding: 4px 1px; background: #fff; border-radius: 8px; box-shadow: 0 1px 3px #00000026; }
.ribbon section { display: flex; flex-direction: column; justify-content: space-between; padding: 11px 7px 0 8px; border-right: 1px solid #e8e8e8; }
.tools { display: flex; align-items: flex-start; gap: 1px; }
.tools button { min-width: 50px; padding: 0 5px; font-size: 13px; line-height: 19px; text-align: center; }
.tools button > svg { width: 32px; height: 32px; margin: 0 auto; }
.tools span { display: flex; align-items: center; justify-content: center; gap: 5px; }
.tools button:disabled { opacity: .4; }
h3 { font-size: 11px; line-height: 16px; font-weight: 400; text-align: center; color: #666; }

.job { flex: 1; min-height: 0; display: flex; border: 3px solid #00dfe0; border-radius: 4px; }
.job-tree { width: 247px; flex: none; display: flex; flex-direction: column; background: linear-gradient(#d6f6f4, #b9f4f4 22%, #b9f4f4 55%, #fff); padding: 5px 5px 7px 6px; }
.tree-buttons { display: flex; gap: 12px; }
.tree-buttons button { height: 23px; display: flex; align-items: center; gap: 4px; padding: 0 7px 0 2px; border: 1px solid #cdeeee; border-radius: 4px; background: #eefcfc; }
.tree-buttons .tog { margin: 0; }
.tree-view { flex: 1; min-height: 0; display: flex; margin: 10px 0 8px 14px; overflow: hidden; }
.tree-view .tree { width: 211px; overflow: hidden; }
.tree-view .vscroll { width: 2px; margin: 17px 0 94px 8px; background: #858a8c; border-radius: 1px; }
.job-tree .hscroll { width: 79px; margin-left: 15px; }
.splitter-v { width: 8px; flex: none; display: grid; place-items: center; background: #f3f3f3; }
.splitter-v::before { content: ""; width: 3px; height: 11px; background: repeating-linear-gradient(#222 0 3px, transparent 3px 4px); }

.flow { flex: 1; min-width: 0; position: relative; display: flex; flex-direction: column; align-items: center; padding: 63px 2px 8px 0; background: linear-gradient(#c6f5f5, #a6f0f1 14%, #98eff0 30%, #98eff0 48%, #b0f3f3 62%, #d8f9f9 80%, #fff 97%); }
.flow-close { position: absolute; top: 12px; right: 14px; }
.flow-close svg { width: 46px; height: 46px; }
.board { padding: 0 22px 52px; border: solid #000; border-width: 0 2px; color: #000; }
h1 { font-size: 16px; line-height: 50px; font-weight: 700; text-align: center; padding-left: 5px; }
.columns { display: flex; gap: 46px; }
.column { width: 194px; display: flex; flex-direction: column; gap: 46px; font-weight: 700; }
.caption { height: 53px; margin-bottom: -46px; display: flex; align-items: center; justify-content: center; }
.column button { height: 34px; display: flex; align-items: center; padding: 0 23px 0 5px; border: 2px solid #000; border-radius: 5px; background: #fff; }
.column button svg { width: 28px; height: 28px; }
.column button span { flex: 1; text-align: center; white-space: nowrap; padding-top: 1px; }
.column .log { justify-content: center; padding: 1px 0 0; background: #d3d3d3; }
.column .done, .legend .done { background: #adff2f; }
.column .ready, .legend .ready { background: #ff0; }
.column .paused, .legend .paused { background: #ff69b4; }
.legend { display: flex; gap: 11px; margin-top: auto; padding-right: 8px; }
.legend li { display: flex; align-items: center; gap: 2px; }
.legend b { width: 16px; height: 16px; border: 1px solid #000; background: #fff; }
.legend .progress { background: #f8a008; }
.legend .hold { background: #f00; }
```
FILE: mosaic.js
```javascript
// Paints each redacted label: one hex digit per cell gives its opacity.
document.querySelectorAll('.mosaic').forEach(function (svg) {
  var size = Number(svg.dataset.cell);
  var rows = svg.dataset.cells.split('|');
  var columns = Math.max.apply(null, rows.map(function (r) { return r.length; }));
  svg.style.width = columns * size + 'px';
  svg.style.height = rows.length * size + 'px';
  rows.forEach(function (row, y) {
    row.split('').forEach(function (digit, x) {
      if (digit === '0') return;
      var rect = document.createElementNS('http://www.w3.org/2000/svg', 'rect');
      rect.setAttribute('x', x * size);
      rect.setAttribute('y', y * size);
      rect.setAttribute('width', size);
      rect.setAttribute('height', size);
      rect.setAttribute('fill', svg.dataset.color);
      rect.setAttribute('opacity', parseInt(digit, 16) / 15);
      svg.appendChild(rect);
    });
  });
});
```
